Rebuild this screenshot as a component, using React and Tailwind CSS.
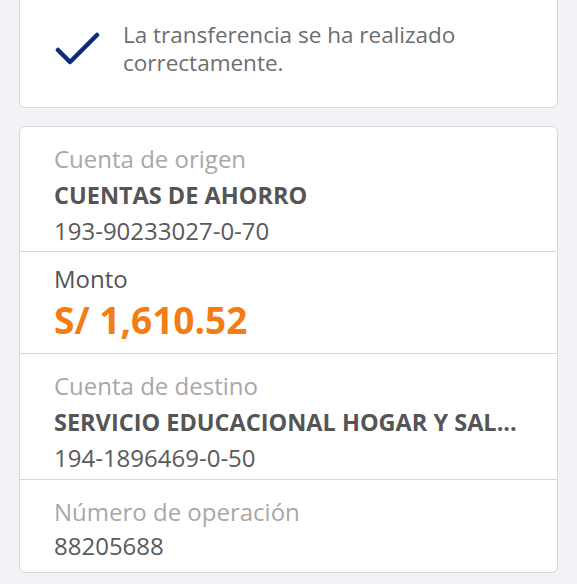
import React from "react";

const rows = [
  { label: "Cuenta de origen", title: "CUENTAS DE AHORRO", sub: "193-90233027-0-70", pb: "pb-[2px]" },
  { label: "Cuenta de destino", title: "SERVICIO EDUCACIONAL HOGAR Y SAL...", sub: "194-1896469-0-50", pb: "pb-[3px]" },
];

function AccountRow({ label, title, sub, pb }) {
  return (
    <div className={`px-[34px] pt-[14px] ${pb} border-b border-[#d6d8dd]`}>
      <div className="text-[24px] leading-[36px] text-[#a8a8a8]">{label}</div>
      <div className="text-[23.5px] leading-[36px] font-bold text-[#555555] whitespace-nowrap">{title}</div>
      <div className="text-[24px] leading-[36px] text-[#5a5a5a]">{sub}</div>
    </div>
  );
}

export default function App() {
  return (
    <div
      className="min-h-[584px] bg-[#f2f3f7] px-[19px] pb-3"
      style={{ fontFamily: '"Open Sans", "Liberation Sans", sans-serif' }}
    >
      {/* success banner */}
      <div className="bg-white border border-t-0 border-[#d6d8dd] rounded-b-md flex items-center pl-[35px] pr-6 pt-[21px] pb-[30px]">
        <svg width="46" height="36" viewBox="0 0 46 36" className="shrink-0 mr-[22px]">
          <path d="M3 19 L15 31 L42 4" fill="none" stroke="#0f2b80" strokeWidth="4.5" strokeLinecap="round" strokeLinejoin="round" />
        </svg>
        <p className="text-[22.5px] leading-[28px] text-[#6e6e6e]">
          La transferencia se ha realizado correctamente.
        </p>
      </div>

      {/* details */}
      <div className="mt-[18px] bg-white border border-[#d6d8dd] rounded-md overflow-hidden">
        <AccountRow {...rows[0]} />

        <div className="px-[34px] pt-[9px] pb-[11px] border-b border-[#d6d8dd]">
          <div className="text-[24px] leading-[36px] text-[#555555]">Monto</div>
          <div className="text-[37px] leading-[45px] font-bold text-[#f57c12]">S/ 1,610.52</div>
        </div>

        <AccountRow {...rows[1]} />

        <div className="px-[34px] pt-[15px] pb-[9px]">
          <div className="text-[24px] leading-[34px] text-[#a8a8a8]">Número de operación</div>
          <div className="text-[24px] leading-[34px] text-[#5a5a5a]">88205688</div>
        </div>
      </div>
    </div>
  );
}
